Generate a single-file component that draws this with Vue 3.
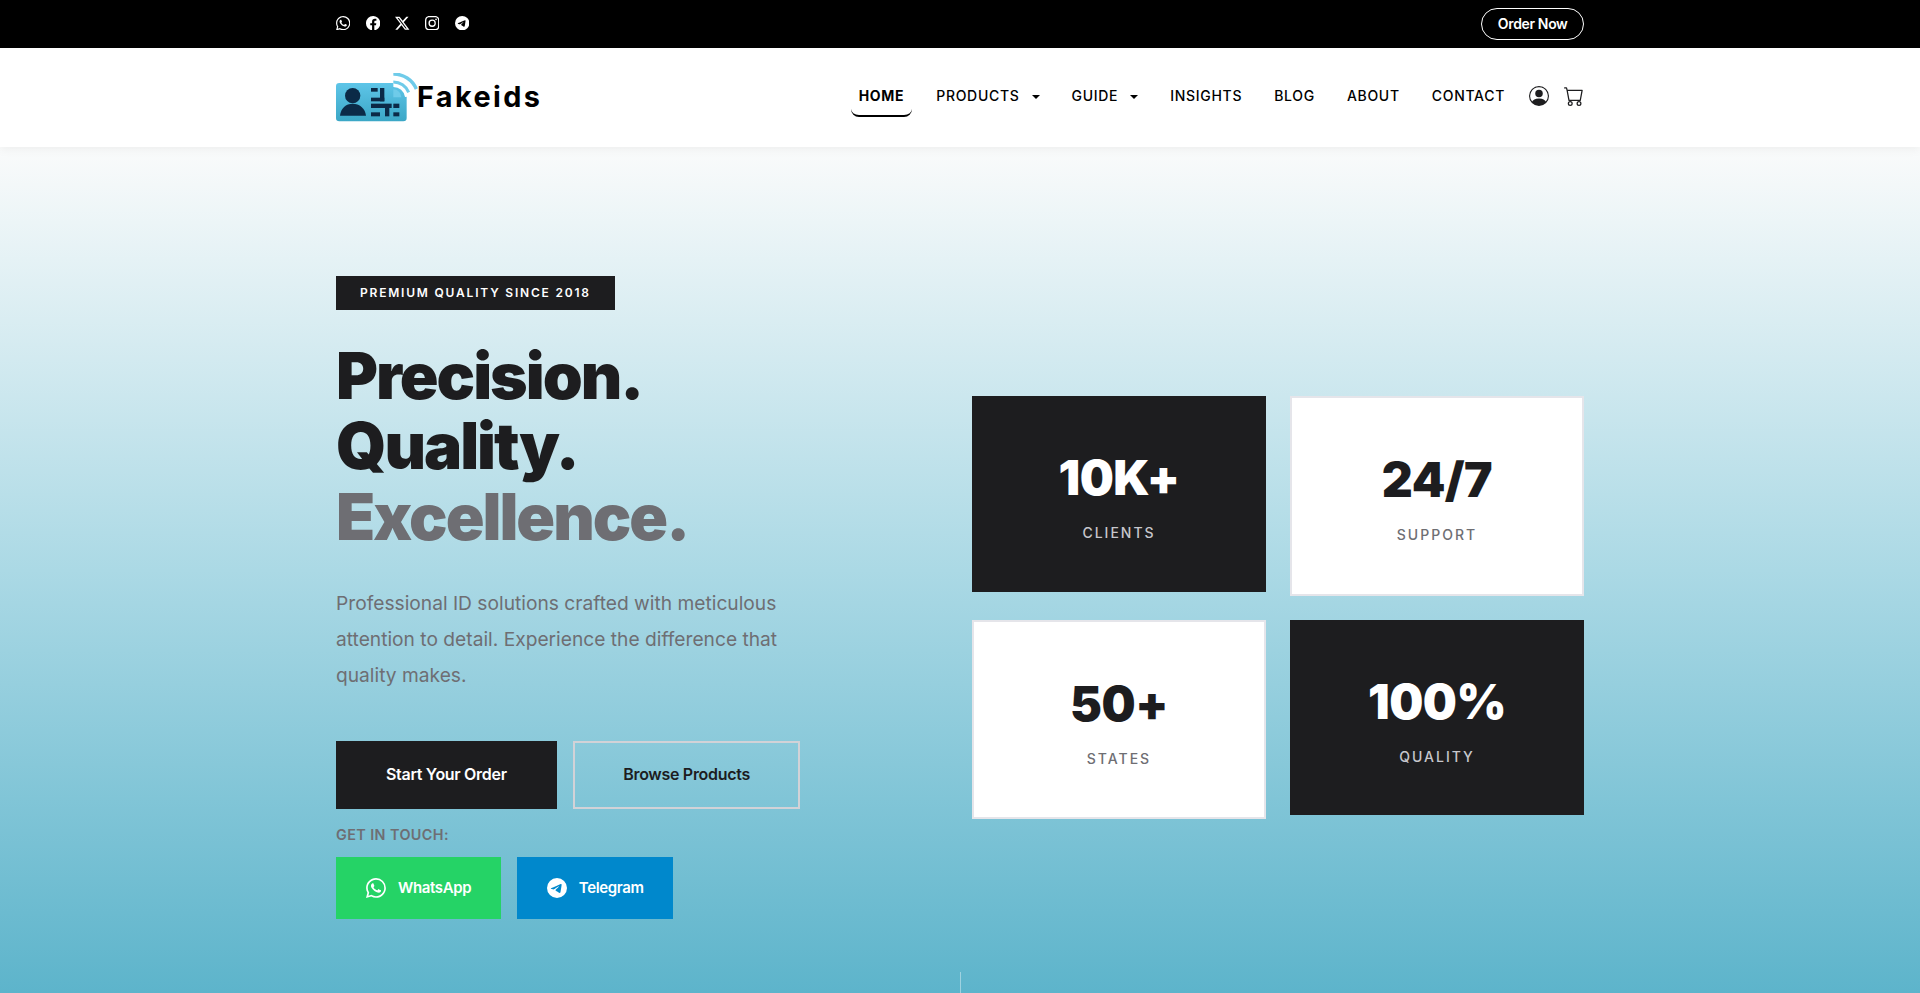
<script setup>
const socials = [
  { name: 'whatsapp', d: 'M13.601 2.326A7.854 7.854 0 0 0 7.994 0C3.627 0 .068 3.558.064 7.926c0 1.399.366 2.76 1.057 3.965L0 16l4.204-1.102a7.933 7.933 0 0 0 3.79.965h.004c4.368 0 7.926-3.558 7.93-7.93A7.898 7.898 0 0 0 13.6 2.326zM7.994 14.521a6.573 6.573 0 0 1-3.356-.92l-.24-.144-2.494.654.666-2.433-.156-.251a6.56 6.56 0 0 1-1.007-3.505c0-3.626 2.957-6.584 6.591-6.584a6.56 6.56 0 0 1 4.66 1.931 6.557 6.557 0 0 1 1.928 4.66c-.004 3.639-2.961 6.592-6.592 6.592zm3.615-4.934c-.197-.099-1.17-.578-1.353-.646-.182-.065-.315-.099-.445.099-.133.197-.513.646-.627.775-.114.133-.232.148-.43.05-.197-.1-.836-.308-1.592-.985-.59-.525-.985-1.175-1.103-1.372-.114-.198-.011-.304.088-.403.087-.088.197-.232.296-.346.1-.114.133-.198.198-.33.065-.134.034-.248-.015-.347-.05-.099-.445-1.076-.612-1.47-.16-.389-.323-.335-.445-.34-.114-.007-.247-.007-.38-.007a.729.729 0 0 0-.529.247c-.182.198-.691.677-.691 1.654 0 .977.71 1.916.81 2.049.098.133 1.394 2.132 3.383 2.992.47.205.84.326 1.129.418.475.152.904.129 1.246.08.38-.058 1.171-.48 1.338-.943.164-.464.164-.86.114-.943-.049-.084-.182-.133-.38-.232z' },
  { name: 'facebook', d: 'M16 8.049c0-4.446-3.582-8.05-8-8.05C3.58 0-.002 3.603-.002 8.05c0 4.017 2.926 7.347 6.75 7.951v-5.625h-2.03V8.05H6.75V6.275c0-2.017 1.195-3.131 3.022-3.131.876 0 1.791.157 1.791.157v1.98h-1.009c-.993 0-1.303.621-1.303 1.258v1.51h2.218l-.354 2.326H9.25V16c3.824-.604 6.75-3.934 6.75-7.951z' },
  { name: 'x', d: 'M12.6.75h2.454l-5.36 6.142L16 15.25h-4.937l-3.867-5.07-4.425 5.07H.316l5.733-6.57L0 .75h5.063l3.495 4.633L12.601.75Zm-.86 13.028h1.36L4.323 2.145H2.865l8.875 11.633Z' },
  { name: 'instagram', d: 'M8 0C5.829 0 5.556.01 4.703.048 3.85.088 3.269.222 2.76.42a3.917 3.917 0 0 0-1.417.923A3.927 3.927 0 0 0 .42 2.76C.222 3.268.087 3.85.048 4.7.01 5.555 0 5.827 0 8.001c0 2.172.01 2.444.048 3.297.04.852.174 1.433.372 1.942.205.526.478.972.923 1.417.444.445.89.719 1.416.923.51.198 1.09.333 1.942.372C5.555 15.99 5.827 16 8 16s2.444-.01 3.298-.048c.851-.04 1.434-.174 1.943-.372a3.916 3.916 0 0 0 1.416-.923c.445-.445.718-.891.923-1.417.197-.509.332-1.09.372-1.942C15.99 10.445 16 10.173 16 8s-.01-2.445-.048-3.299c-.04-.851-.175-1.433-.372-1.941a3.926 3.926 0 0 0-.923-1.417A3.911 3.911 0 0 0 13.24.42c-.51-.198-1.092-.333-1.943-.372C10.443.01 10.172 0 7.998 0h.003zm-.717 1.442h.718c2.136 0 2.389.007 3.232.046.78.035 1.204.166 1.486.275.373.145.64.319.92.599.28.28.453.546.598.92.11.281.24.705.275 1.485.039.843.047 1.096.047 3.231s-.008 2.389-.047 3.232c-.035.78-.166 1.203-.275 1.485a2.47 2.47 0 0 1-.599.919c-.28.28-.546.453-.92.598-.28.11-.704.24-1.485.276-.843.038-1.096.047-3.232.047s-2.39-.009-3.233-.047c-.78-.036-1.203-.166-1.485-.276a2.478 2.478 0 0 1-.92-.598 2.48 2.48 0 0 1-.6-.92c-.109-.281-.24-.705-.275-1.485-.038-.843-.046-1.096-.046-3.233 0-2.136.008-2.388.046-3.231.036-.78.166-1.204.276-1.486.145-.373.319-.64.599-.92.28-.28.546-.453.92-.598.282-.11.705-.24 1.485-.276.738-.034 1.024-.044 2.515-.045v.002zm4.988 1.328a.96.96 0 1 0 0 1.92.96.96 0 0 0 0-1.92zm-4.27 1.122a4.109 4.109 0 1 0 0 8.217 4.109 4.109 0 0 0 0-8.217zm0 1.441a2.667 2.667 0 1 1 0 5.334 2.667 2.667 0 0 1 0-5.334z' },
  { name: 'telegram', d: 'M16 8A8 8 0 1 1 0 8a8 8 0 0 1 16 0zM8.287 5.906c-.778.324-2.334.994-4.666 2.01-.378.15-.577.298-.595.442-.03.243.275.339.69.47l.175.055c.408.133.958.288 1.243.294.26.006.549-.1.868-.32 2.179-1.471 3.304-2.214 3.374-2.23.05-.012.12-.026.166.016.047.041.042.12.037.141-.03.129-1.227 1.241-1.846 1.817-.193.18-.33.307-.358.336a8.154 8.154 0 0 1-.188.186c-.38.366-.664.64.015 1.088.327.216.589.393.85.571.284.194.568.387.936.629.093.06.183.125.27.187.331.236.63.448.997.414.214-.02.435-.22.547-.82.265-1.417.786-4.486.906-5.751a1.426 1.426 0 0 0-.013-.315.337.337 0 0 0-.114-.217.526.526 0 0 0-.31-.093c-.3.005-.763.166-2.984 1.09z' }
]
const wa = socials[0].d
const tg = socials[4].d
const links = [
  { label: 'HOME', active: true },
  { label: 'PRODUCTS', caret: true },
  { label: 'GUIDE', caret: true },
  { label: 'INSIGHTS' },
  { label: 'BLOG' },
  { label: 'ABOUT' },
  { label: 'CONTACT' }
]
const stats = [
  { value: '10K+', label: 'CLIENTS', dark: true },
  { value: '24/7', label: 'SUPPORT', dark: false },
  { value: '50+', label: 'STATES', dark: false },
  { value: '100%', label: 'QUALITY', dark: true }
]
</script>

<template>
  <div class="page">
    <div class="topbar">
      <div class="container topbar-inner">
        <div class="socials">
          <svg v-for="s in socials" :key="s.name" class="social" viewBox="0 0 16 16" fill="currentColor"><path :d="s.d" /></svg>
        </div>
        <a class="order">Order Now</a>
      </div>
    </div>

    <nav class="nav">
      <div class="container nav-inner">
        <div class="brand">
          <svg class="logo" viewBox="0 0 246 150">
            <defs>
              <linearGradient id="cardg" x1="0" y1="0" x2="0" y2="1">
                <stop offset="0" stop-color="#5ec5e8" />
                <stop offset="1" stop-color="#3ba7c6" />
              </linearGradient>
            </defs>
            <rect x="0" y="30" width="212" height="115" rx="10" fill="url(#cardg)" />
            <circle cx="50" cy="68" r="23" fill="#0b2a47" />
            <path d="M12 128C14 106 30 92 50 92C70 92 88 106 90 128Z" fill="#0b2a47" />
            <g fill="#0b2a47">
              <rect x="105" y="45" width="20" height="11" />
              <rect x="132" y="45" width="13" height="40" />
              <rect x="105" y="74" width="40" height="11" />
              <rect x="105" y="92" width="62" height="13" />
              <rect x="172" y="92" width="18" height="13" />
              <rect x="105" y="118" width="27" height="12" />
              <rect x="147" y="105" width="13" height="25" />
              <rect x="172" y="118" width="18" height="12" />
            </g>
            <path d="M172 27A50 50 0 0 1 222 70" fill="none" stroke="#fff" stroke-width="30" />
            <path d="M172 3A74 74 0 0 1 241 48" fill="none" stroke="#6fcbe9" stroke-width="10" />
            <path d="M172 27A50 50 0 0 1 218 58" fill="none" stroke="#6fcbe9" stroke-width="9" />
            <path d="M172 49A24 24 0 0 1 196 73H172Z" fill="#6fcbe9" />
          </svg>
          <span class="brand-name">Fakeids</span>
        </div>
        <div class="menu">
          <a v-for="l in links" :key="l.label" class="link" :class="{ active: l.active }">
            {{ l.label }}<i v-if="l.caret" class="caret"></i>
          </a>
          <svg class="user" viewBox="0 0 16 16" fill="currentColor"><path d="M11 6a3 3 0 1 1-6 0 3 3 0 0 1 6 0z" /><path fill-rule="evenodd" d="M0 8a8 8 0 1 1 16 0A8 8 0 0 1 0 8zm8-7a7 7 0 0 0-5.468 11.37C3.242 11.226 4.805 10 8 10s4.757 1.225 5.468 2.37A7 7 0 0 0 8 1z" /></svg>
          <svg class="cart" viewBox="0 0 16 16" fill="currentColor"><path d="M0 1.5A.5.5 0 0 1 .5 1H2a.5.5 0 0 1 .485.379L2.89 3H14.5a.5.5 0 0 1 .491.592l-1.5 8A.5.5 0 0 1 13 12H4a.5.5 0 0 1-.491-.408L2.01 3.607 1.61 2H.5a.5.5 0 0 1-.5-.5zM3.102 4l1.313 7h8.17l1.313-7H3.102zM5 12a2 2 0 1 0 0 4 2 2 0 0 0 0-4zm7 0a2 2 0 1 0 0 4 2 2 0 0 0 0-4zm-7 1a1 1 0 1 1 0 2 1 1 0 0 1 0-2zm7 0a1 1 0 1 1 0 2 1 1 0 0 1 0-2z" /></svg>
        </div>
      </div>
    </nav>

    <section class="hero">
      <div class="container hero-grid">
        <div class="left">
          <span class="badge">PREMIUM QUALITY SINCE 2018</span>
          <h1 class="title">Precision.<br />Quality.<br /><span class="muted">Excellence.</span></h1>
          <p class="lead">Professional ID solutions crafted with meticulous attention to detail. Experience the difference that quality makes.</p>
          <div class="cta">
            <a class="btn primary">Start Your Order</a>
            <a class="btn outline">Browse Products</a>
          </div>
          <div class="touch">GET IN TOUCH:</div>
          <div class="contact">
            <a class="chat wa"><svg viewBox="0 0 16 16" fill="currentColor"><path :d="wa" /></svg>WhatsApp</a>
            <a class="chat tg"><svg viewBox="0 0 16 16" fill="currentColor"><path :d="tg" /></svg>Telegram</a>
          </div>
        </div>
        <div class="stats">
          <div v-for="s in stats" :key="s.label" class="stat" :class="s.dark ? 'dark' : 'light'">
            <div class="num">{{ s.value }}</div>
            <div class="lab">{{ s.label }}</div>
          </div>
        </div>
      </div>
      <div class="scroll-line"></div>
    </section>
  </div>
</template>

<style>
html, body { margin: 0; overflow: hidden; }
</style>

<style scoped>
* { box-sizing: border-box; }
.page { height: 993px; overflow: hidden; font-family: Inter, "Liberation Sans", sans-serif; line-height: 1.6; color: #1d1d1f; }
.container { width: 1248px; margin: 0 auto; }
.topbar { background: #000; height: 48px; color: #fff; }
.topbar-inner { height: 48px; display: flex; align-items: center; justify-content: space-between; }
.socials { display: flex; gap: 15.3px; margin-top: -2px; }
.social { width: 14.4px; height: 14.4px; display: block; }
.order { display: block; border: 1px solid #fff; border-radius: 20px; height: 32px; line-height: 30px; padding: 0 15.5px; color: #fff; font-size: 14px; font-weight: 600; letter-spacing: -0.35px; }
.nav { background: #fff; height: 99px; position: relative; z-index: 2; box-shadow: 0 2px 10px rgba(0,0,0,.06); }
.nav-inner { height: 99px; display: flex; align-items: center; justify-content: space-between; }
.brand { display: flex; align-items: center; }
.logo { width: 82px; height: 50px; display: block; }
.brand-name { font-size: 28.8px; font-weight: 700; letter-spacing: 2.4px; color: #000; margin-left: -1px; }
.menu { display: flex; align-items: center; color: #000; }
.link { display: block; margin: -1px 8px 0; padding: 8px; font-size: 14px; font-weight: 500; letter-spacing: .7px; line-height: 22.4px; border-radius: 8px; border-bottom: 2px solid transparent; white-space: nowrap; }
.link.active { font-weight: 700; border-bottom-color: #000; }
.caret { display: inline-block; margin-left: 12px; vertical-align: 2px; border-top: 4px solid #000; border-left: 4px solid transparent; border-right: 4px solid transparent; }
.user { width: 20px; height: 20px; margin: -3px 0 0 8px; color: #1d1d1f; }
.cart { width: 20px; height: 20px; margin: -3px 0 0 15px; color: #1d1d1f; }
.hero { height: 846px; position: relative; background: linear-gradient(180deg, #fafbfb 0%, #abd9e5 50%, #5db4cb 100%); }
.hero-grid { display: grid; grid-template-columns: 1fr 1fr; gap: 24px; padding-top: 129px; }
.left { display: flex; flex-direction: column; align-items: flex-start; }
.badge { display: block; background: #1d1d1f; color: #fff; font-size: 12px; font-weight: 600; letter-spacing: 1.8px; line-height: 19.2px; padding: 7.4px 24px; }
.title { margin: 31px 0 0; font-size: 64px; line-height: 1.1; font-weight: 900; letter-spacing: -2px; color: #1d1d1f; font-variation-settings: "opsz" 32; font-feature-settings: "ss07" 0, "calt" 1; }
.muted { color: #6e6e73; }
.lead { margin: 34px 0 0; max-width: 480px; font-size: 19.2px; line-height: 35.7px; color: #6e6e73; }
.cta { display: flex; gap: 16px; margin-top: 48px; }
.btn { display: block; height: 68px; line-height: 62px; border: 2px solid transparent; padding: 0 48px; font-size: 16px; font-weight: 600; letter-spacing: -.3px; }
.primary { background: #1d1d1f; color: #fff; border-color: #1d1d1f; }
.outline { border-color: #d2d2d7; color: #1d1d1f; padding: 0 48.5px; }
.touch { margin-top: 14px; font-size: 14.4px; font-weight: 600; letter-spacing: .4px; color: #6e6e73; line-height: 24px; }
.contact { display: flex; gap: 16px; margin-top: 10px; }
.chat { display: flex; align-items: center; gap: 12px; height: 62px; padding: 0 30px; color: #fff; font-size: 15px; font-weight: 600; letter-spacing: -.35px; }
.chat svg { width: 20px; height: 20px; display: block; }
.wa { background: #25d366; }
.tg { background: #0088cc; gap: 11.5px; padding-right: 29.5px; }
.stats { display: grid; grid-template-columns: 1fr 1fr; gap: 24px; align-items: start; align-self: start; margin-top: 120px; }
.stat { padding: 48px 32px; text-align: center; }
.dark { background: #1d1d1f; color: #fff; }
.light { background: #fff; border: 2px solid #e5e5ea; color: #1d1d1f; }
.num { font-size: 48px; font-weight: 900; line-height: 68px; margin-bottom: 9.8px; letter-spacing: -.5px; }
.lab { font-size: 14px; font-weight: 500; letter-spacing: 2px; line-height: 21.4px; padding-bottom: .5px; }
.dark .lab { color: #c7c7cc; }
.light .lab { color: #6e6e73; }
.scroll-line { position: absolute; left: 960px; top: 825px; width: 1px; height: 21px; background: rgba(255,255,255,.4); }
</style>
